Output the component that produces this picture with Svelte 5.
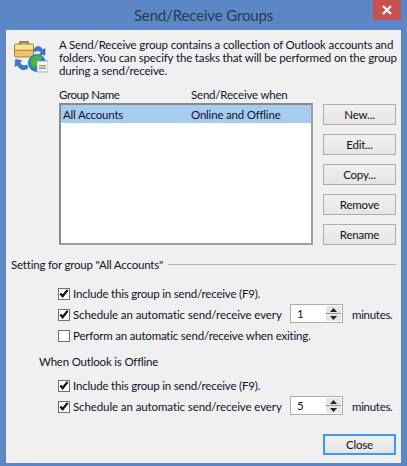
<script>
  const buttons = ['New...', 'Edit...', 'Copy...', 'Remove', 'Rename'];
</script>

{#snippet check(label, checked)}
  <div class="check">
    <span class="box">
      {#if checked}
        <svg width="11" height="11" viewBox="0 0 11 11"><path d="M1.5 5.5 L4 8.5 L9.5 1.5" fill="none" stroke="#111" stroke-width="2.6"/></svg>
      {/if}
    </span>
    <span>{label}</span>
  </div>
{/snippet}

{#snippet schedule(value)}
  <div class="check sched">
    <span class="box"><svg width="11" height="11" viewBox="0 0 11 11"><path d="M1.5 5.5 L4 8.5 L9.5 1.5" fill="none" stroke="#111" stroke-width="2.6"/></svg></span>
    <span class="sched-label">Schedule an automatic send/receive every</span>
    <div class="spin">
      <span class="val">{value}</span>
      <div class="arrows">
        <span class="arrow"><svg width="7" height="4" viewBox="0 0 7 4"><path d="M3.5 0 L7 4 L0 4Z" fill="#222"/></svg></span>
        <span class="arrow"><svg width="7" height="4" viewBox="0 0 7 4"><path d="M0 0 L7 0 L3.5 4Z" fill="#222"/></svg></span>
      </div>
    </div>
    <span class="min">minutes.</span>
  </div>
{/snippet}

<div class="window">
  <div class="titlebar">
    <span class="title">Send/Receive Groups</span>
    <div class="close">
      <svg width="10" height="10" viewBox="0 0 10 10"><path d="M1 1 L9 9 M9 1 L1 9" stroke="#fff" stroke-width="2.2"/></svg>
    </div>
  </div>
  <div class="body">
    <div class="top">
      <svg class="icon" width="34" height="34" viewBox="0 0 34 34">
        <path d="M6 4.5 V2 H14 V4.5" fill="none" stroke="#7a5a20" stroke-width="1.3"/>
        <rect x="0.5" y="4" width="19" height="13" rx="1.5" fill="#e9c768" stroke="#a8842f"/>
        <rect x="1" y="5" width="18" height="4" fill="#f6e29c"/>
        <rect x="1" y="10" width="18" height="1" fill="#b8923c"/>
        <path d="M20 10 C22 5 27 6 29 10 L31 8.5 L31 15 L25 14.5 L27 12.5 C25.5 10.5 23 10 21 12Z" fill="#3a78d8" stroke="#1f4fa6" stroke-width=".5"/>
        <path d="M14 28 C11 31 5 30 3.5 25 L1 26.5 L1.5 19.5 L8 20.5 L5.8 22.5 C7 25.5 10 26.5 13 25Z" fill="#3a78d8" stroke="#1f4fa6" stroke-width=".5"/>
        <circle cx="23" cy="23" r="9" fill="#2f78c8"/>
        <path d="M17 19 C20 15 25 14 28 17 C28 20 25 20 24 22 C23 25 21 28 19 28 C18 25 15 23 17 19Z" fill="#49b63f"/>
        <rect x="23" y="21" width="11" height="11" fill="#f4f6fb" stroke="#8a9ab8" stroke-width=".7"/>
        <rect x="25" y="25" width="7" height="1.4" fill="#e28a3a"/>
        <rect x="25" y="27.5" width="7" height="1.4" fill="#6c8fc8"/>
      </svg>
      <p>A Send/Receive group contains a collection of Outlook accounts and<br>folders. You can specify the tasks that will be performed on the group<br>during a send/receive.</p>
    </div>

    <div class="mid">
      <div class="listcol">
        <div class="cols"><span class="c1">Group Name</span><span>Send/Receive when</span></div>
        <div class="list">
          <div class="row"><span class="c1b">All Accounts</span><span>Online and Offline</span></div>
        </div>
      </div>
      <div class="btns">
        {#each buttons as b}<button>{b}</button>{/each}
      </div>
    </div>

    <div class="group"><span>Setting for group "All Accounts"</span><i></i></div>

    <div class="checks">
      {@render check('Include this group in send/receive (F9).', true)}
      {@render schedule(1)}
      {@render check('Perform an automatic send/receive when exiting.', false)}
    </div>

    <div class="offline">When Outlook is Offline</div>

    <div class="checks second">
      {@render check('Include this group in send/receive (F9).', true)}
      {@render schedule(5)}
    </div>

    <div class="footer"><button class="primary">Close</button></div>
  </div>
</div>

<style>
  :global(body) { margin: 0; }
  .window {
    width: 407px; height: 466px; background: #5b87c6; overflow: hidden;
    display: flex; flex-direction: column; box-sizing: border-box;
    font: 11.5px/13px Lato, "Open Sans", sans-serif; letter-spacing: -0.2px; color: #12122a;
  }
  .titlebar { height: 30px; flex: none; position: relative; display: flex; align-items: center; justify-content: center; }
  .title { font-size: 15px; letter-spacing: -0.15px; color: #2b3a52; }
  .close { position: absolute; top: 0; right: 6px; width: 28px; height: 20px; background: #c75050; display: flex; align-items: center; justify-content: center; }
  .body { margin: 0 6px; height: 433px; background: #f0f0f0; padding: 8px 5px 0 5px; box-sizing: border-box; }
  .top { display: flex; height: 50px; }
  .icon { width: 34px; height: 34px; margin: 2px 0 0 3px; flex: none; }
  .top p { margin: 0 0 0 11px; width: 335px; white-space: nowrap; letter-spacing: -0.15px; }
  .mid { display: flex; gap: 10px; padding-left: 48px; }
  .cols { display: flex; height: 15px; white-space: nowrap; }
  .c1 { width: 132px; display: block; letter-spacing: -0.4px; }
  .c1b { width: 128px; display: block; }
  .listcol { width: 254px; }
  .list { width: 254px; height: 142px; border: 2px solid #a0a0a0; border-color: #8a8a8a #a0a0a0 #a0a0a0 #8a8a8a; background: #fff; box-sizing: border-box; }
  .row { display: flex; align-items: center; height: 18px; background: #a6cdf0; padding-left: 2px; white-space: nowrap; }
  .btns { display: flex; flex-direction: column; gap: 9px; padding-top: 16px; }
  button {
    width: 73px; height: 21px; padding: 0; font: inherit; letter-spacing: inherit; color: #111;
    border: 1.5px solid #adadad; background: linear-gradient(#f0f0f0, #e5e5e5); box-sizing: border-box;
  }
  .primary { border: 2px solid #3c9af0; }
  .group { display: flex; align-items: center; gap: 5px; margin-top: 13px; width: 385px; height: 13px; white-space: nowrap; }
  .group i { flex: 1; height: 1px; background: #b5b5b5; }
  .checks { margin-top: 16px; padding-left: 47px; display: flex; flex-direction: column; gap: 8px; }
  .check { display: flex; align-items: center; height: 13px; white-space: nowrap; }
  .box { width: 12px; height: 12px; flex: none; border: 1px solid #707070; background: #fff; box-sizing: border-box; margin-right: 3px; display: flex; align-items: center; justify-content: center; }
  .sched-label { width: 217px; letter-spacing: -0.1px; }
  .spin { width: 53px; height: 19px; flex: none; margin-bottom: 2px; border: 1px solid #adadad; background: #fff; box-sizing: border-box; display: flex; justify-content: space-between; padding: 1px; }
  .val { padding-left: 5px; line-height: 16px; }
  .arrows { width: 15px; display: flex; flex-direction: column; gap: 1px; background: #9a9a9a; }
  .arrow { flex: 1; background: #e6e6e6; display: flex; align-items: center; justify-content: center; }
  .min { margin-left: 9px; letter-spacing: -0.3px; }
  .offline { margin-top: 13px; padding-left: 28px; }
  .second { margin-top: 11px; }
  .footer { display: flex; margin-top: 21px; padding-left: 312px; }
</style>
